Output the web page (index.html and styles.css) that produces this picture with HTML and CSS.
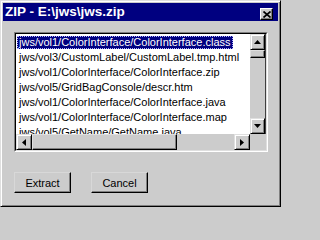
FILE: index.html
```html
<!DOCTYPE html>
<html>
<head>
<meta charset="utf-8">
<link rel="stylesheet" href="styles.css">
</head>
<body>
<div class="window">
  <div class="titlebar">
    <span class="title">ZIP - E:\jws\jws.zip</span>
    <span class="close"><svg width="8" height="7" viewBox="0 0 8 7"><path d="M0.5 0.5L7.5 6.5M7.5 0.5L0.5 6.5" stroke="#000" stroke-width="1.7" fill="none"/></svg></span>
  </div>
  <div class="body">
    <div class="listbox">
      <div class="listinner">
        <div class="items">
          <div class="item"><span class="txt sel">jws/vol1/ColorInterface/ColorInterface.class</span></div>
          <div class="item"><span class="txt">jws/vol3/CustomLabel/CustomLabel.tmp.html</span></div>
          <div class="item"><span class="txt">jws/vol1/ColorInterface/ColorInterface.zip</span></div>
          <div class="item"><span class="txt">jws/vol5/GridBagConsole/descr.htm</span></div>
          <div class="item"><span class="txt">jws/vol1/ColorInterface/ColorInterface.java</span></div>
          <div class="item"><span class="txt">jws/vol1/ColorInterface/ColorInterface.map</span></div>
          <div class="item"><span class="txt">jws/vol5/GetName/GetName.java</span></div>
        </div>
        <div class="vscroll">
          <div class="sbtn"><svg width="7" height="4" viewBox="0 0 7 4"><polygon points="3.5,0 7,4 0,4" fill="#000"/></svg></div>
          <div class="vthumb"></div>
          <div class="track"></div>
          <div class="sbtn"><svg width="7" height="4" viewBox="0 0 7 4"><polygon points="0,0 7,0 3.5,4" fill="#000"/></svg></div>
        </div>
        <div class="hscroll">
          <div class="sbtn"><svg width="4" height="7" viewBox="0 0 4 7"><polygon points="4,0 4,7 0,3.5" fill="#000"/></svg></div>
          <div class="hthumb"></div>
          <div class="track"></div>
          <div class="sbtn"><svg width="4" height="7" viewBox="0 0 4 7"><polygon points="0,0 4,3.5 0,7" fill="#000"/></svg></div>
        </div>
        <div class="corner"></div>
      </div>
    </div>
    <div class="buttons">
      <button class="btn">Extract</button>
      <button class="btn">Cancel</button>
    </div>
  </div>
</div>
</body>
</html>
```

FILE: styles.css
```css
* { box-sizing: border-box; }

body {
  margin: 0;
  background: #cccccc;
  font-family: "Liberation Sans", Arial, sans-serif;
}

.window {
  width: 281px;
  height: 207px;
  background: #cccccc;
  border: 1px solid;
  border-color: #dfdfdf #000 #000 #dfdfdf;
  box-shadow: inset 1px 1px #fff, inset -1px -1px #808080;
  padding: 2px;
}

.titlebar {
  height: 18px;
  background: #000080;
  color: #fff;
  display: flex;
  justify-content: space-between;
  align-items: center;
  padding: 0 5px 0 2px;
}

.title {
  font-weight: bold;
  font-size: 13.5px;
  line-height: 18px;
  white-space: nowrap;
}

.close {
  width: 13px;
  height: 12px;
  margin-top: 4px;
  background: #cccccc;
  border: 1px solid;
  border-color: #fff #000 #000 #fff;
  box-shadow: inset -1px -1px #808080;
  display: flex;
  align-items: center;
  justify-content: center;
}

.close svg { display: block; }

.body {
  padding: 11px 0 0 11px;
}

.listbox {
  width: 254px;
  height: 120px;
  border: 1px solid;
  border-color: #808080 #fff #fff #808080;
}

.listinner {
  width: 100%;
  height: 100%;
  border: 1px solid;
  border-color: #000 #dfdfdf #dfdfdf #000;
  display: grid;
  grid-template-columns: 1fr 16px;
  grid-template-rows: 1fr 16px;
}

.items {
  background: #fff;
  overflow: hidden;
  padding: 1px 0 0 1px;
  font-size: 11px;
  color: #000;
}

.item {
  height: 15px;
  white-space: nowrap;
}

.txt {
  display: inline-block;
  height: 13px;
  line-height: 13px;
  margin-top: 1px;
  padding: 0 2px;
}

.sel {
  background: #000080;
  color: #fff;
  outline: 1px dotted #b0b0ff;
  outline-offset: -1px;
}

.vscroll {
  display: flex;
  flex-direction: column;
  background: #cccccc;
  border-right: 1px solid #404040;
}

.vscroll .sbtn { width: 15px; }

.hscroll {
  display: flex;
  background: #cccccc;
}

.sbtn {
  width: 16px;
  height: 16px;
  flex: none;
  background: #cccccc;
  border: 1px solid;
  border-color: #dfdfdf #000 #000 #dfdfdf;
  box-shadow: inset 1px 1px #fff, inset -1px -1px #808080;
  display: flex;
  align-items: center;
  justify-content: center;
}

.sbtn svg { display: block; }

.vthumb {
  height: 8px;
  flex: none;
  border: 1px solid;
  border-color: #dfdfdf #000 #000 #dfdfdf;
  box-shadow: inset -1px -1px #808080;
}

.hthumb {
  width: 145px;
  flex: none;
  border: 1px solid;
  border-color: #dfdfdf #000 #000 #dfdfdf;
  box-shadow: inset -1px -1px #808080;
}

.track {
  flex: 1;
  background: #cccccc;
}

.corner {
  background: #cccccc;
}

.buttons {
  display: flex;
  gap: 20px;
  margin-top: 20px;
}

.btn {
  width: 57px;
  height: 21px;
  padding: 0;
  font-family: "Liberation Sans", Arial, sans-serif;
  font-size: 11px;
  color: #000;
  background: #cccccc;
  border: 1px solid;
  border-color: #d8d8d8 #000 #000 #d8d8d8;
  box-shadow: inset -1px -1px #808080;
}
```
